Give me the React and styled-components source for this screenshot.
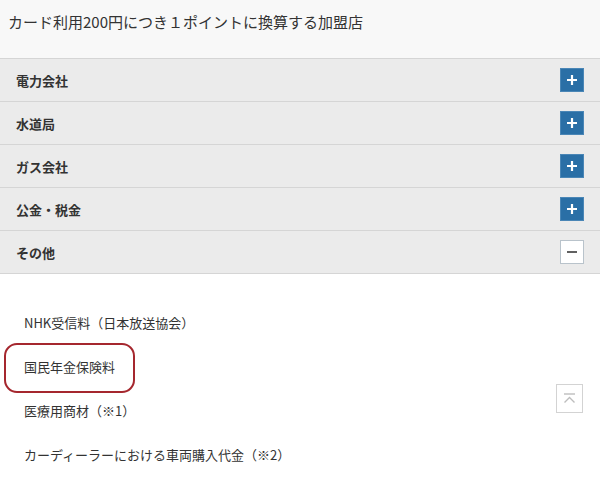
import React from "react";
import styled, { createGlobalStyle } from "styled-components";

const Global = createGlobalStyle`
  html, body { margin: 0; padding: 0; background: #fff; }
  body { font-family: "Noto Sans CJK JP", "Noto Sans", sans-serif; color: #333; }
  * { box-sizing: border-box; }
`;

const Page = styled.div`
  width: 600px;
  height: 482px;
  overflow: hidden;
  position: relative;
  background: #fff;
`;

const Header = styled.div`
  height: 58px;
  background: #f8f8f8;
  display: flex;
  align-items: flex-start;
  padding: 11px 0 0 8px;
`;

const Title = styled.h2`
  margin: 0;
  font-size: 15px;
  font-weight: 400;
  line-height: 22px;
  color: #333;
  letter-spacing: 0;
`;

const Accordion = styled.div`
  border-top: 1px solid #d5d5d5;
`;

const Row = styled.div`
  height: 43px;
  background: #ebebeb;
  border-bottom: 1px solid #d5d5d5;
  display: flex;
  align-items: center;
  justify-content: space-between;
  padding: 0 16px 0 16px;
`;

const RowLabel = styled.span`
  font-size: 13px;
  font-weight: 700;
  color: #333;
`;

const Toggle = styled.span`
  width: 24px;
  height: 24px;
  display: flex;
  align-items: center;
  justify-content: center;
  background: ${(p) => (p.$open ? "#fff" : "#2a6fa6")};
  border: 1px solid ${(p) => (p.$open ? "#b9c3cb" : "#4a86b6")};
  color: ${(p) => (p.$open ? "#3a3a3a" : "#fff")};
`;

const Panel = styled.ul`
  list-style: none;
  margin: 0;
  padding: 27px 0 0 0;
`;

const Item = styled.li`
  position: relative;
  height: 44px;
  line-height: 44px;
  padding-left: 24px;
  font-size: 13px;
  color: #333;
`;

const Mark = styled.span`
  position: absolute;
  left: 4px;
  top: -2px;
  width: 131px;
  height: 50px;
  border: 2.5px solid #a5272e;
  border-radius: 13px;
  pointer-events: none;
`;

const TopButton = styled.button`
  position: absolute;
  right: 17px;
  top: 384px;
  width: 27px;
  height: 29px;
  padding: 0;
  background: #fff;
  border: 1px solid #d3d3d3;
  display: flex;
  align-items: center;
  justify-content: center;
`;

const Plus = () => (
  <svg width="12" height="12" viewBox="0 0 12 12">
    <path d="M6 1v10M1 6h10" stroke="currentColor" strokeWidth="2.2" />
  </svg>
);

const Minus = () => (
  <svg width="12" height="12" viewBox="0 0 12 12">
    <path d="M1 6h10" stroke="currentColor" strokeWidth="1.6" />
  </svg>
);

const rows = [
  { label: "電力会社" },
  { label: "水道局" },
  { label: "ガス会社" },
  { label: "公金・税金" },
  { label: "その他", open: true },
];

const items = [
  "NHK受信料（日本放送協会）",
  "国民年金保険料",
  "医療用商材（※1）",
  "カーディーラーにおける車両購入代金（※2）",
];

export default function App() {
  return (
    <Page>
      <Global />
      <Header>
        <Title>カード利用200円につき１ポイントに換算する加盟店</Title>
      </Header>
      <Accordion>
        {rows.map((r) => (
          <Row key={r.label}>
            <RowLabel>{r.label}</RowLabel>
            <Toggle $open={r.open}>{r.open ? <Minus /> : <Plus />}</Toggle>
          </Row>
        ))}
      </Accordion>
      <Panel>
        {items.map((t, i) => (
          <Item key={t}>
            {t}
            {i === 1 && <Mark />}
          </Item>
        ))}
      </Panel>
      <TopButton aria-label="ページトップへ">
        <svg width="13" height="11" viewBox="0 0 13 11">
          <path d="M1 1h11" stroke="#bdbdbd" strokeWidth="1.4" />
          <path d="M1.5 9.5L6.5 4.5L11.5 9.5" stroke="#bdbdbd" strokeWidth="1.4" fill="none" />
        </svg>
      </TopButton>
    </Page>
  );
}
